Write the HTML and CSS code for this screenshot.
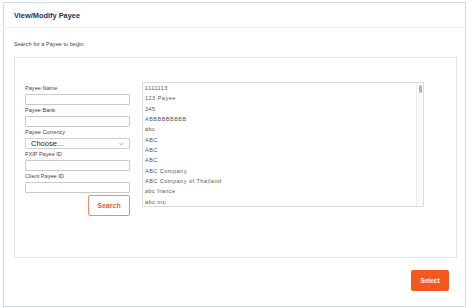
FILE: index.html
```html
<!DOCTYPE html>
<html>
<head>
<meta charset="utf-8">
<link rel="stylesheet" href="styles.css">
</head>
<body>
<div class="frame">
  <div class="header"><h1 class="title">View/Modify Payee</h1></div>
  <p class="intro">Search for a Payee to begin.</p>
  <div class="panel">
    <div class="form">
      <label class="lbl">Payee Name</label>
      <div class="input"></div>
      <label class="lbl">Payee Bank</label>
      <div class="input"></div>
      <label class="lbl">Payee Currency</label>
      <div class="select"><span class="choose">Choose...</span><svg class="caret" width="5" height="4" viewBox="0 0 5 4"><path d="M0.5 1 L2.5 3 L4.5 1" fill="none" stroke="#999" stroke-width="0.8"/></svg></div>
      <label class="lbl">FXIP Payee ID</label>
      <div class="input"></div>
      <label class="lbl">Client Payee ID</label>
      <div class="input"></div>
      <div class="actions"><button class="btn-search">Search</button></div>
    </div>
    <div class="listbox">
      <ul class="items">
        <li>1111113</li>
        <li>123 Payee</li>
        <li>345</li>
        <li>ABBBBBBBBB</li>
        <li>abc</li>
        <li>ABC</li>
        <li>ABC</li>
        <li>ABC</li>
        <li>ABC Company</li>
        <li>ABC Company of Thailand</li>
        <li>abc france</li>
        <li>abc inc</li>
      </ul>
      <div class="scrollbar"><div class="thumb"></div></div>
    </div>
  </div>
  <div class="footer"><button class="btn-select">Select</button></div>
</div>
</body>
</html>
```
FILE: styles.css
```css
html, body {
  margin: 0;
  padding: 0;
  background: #fff;
}
body {
  font-family: "Liberation Sans", Arial, sans-serif;
  color: #333;
}
.frame {
  box-sizing: border-box;
  margin: 2px 0 0 3px;
  width: 463px;
  height: 305px;
  border: 1.5px solid #cfdcec;
  display: flex;
  flex-direction: column;
}
.header {
  height: 23px;
  border-bottom: 1px solid #eef0f3;
  display: flex;
  align-items: center;
  padding-left: 10px;
  padding-top: 1px;
}
.title {
  margin: 0;
  font-size: 7.4px;
  font-weight: bold;
  color: #1c2f55;
}
.intro {
  margin: 12px 0 0 10px;
  font-size: 5.6px;
  line-height: 8px;
  color: #444;
}
.panel {
  box-sizing: border-box;
  margin: 9px 0 0 10px;
  width: 443px;
  height: 201px;
  border: 1px solid #e3e3e3;
  display: flex;
  align-items: flex-start;
  padding: 24px 0 0 10px;
  gap: 12px;
}
.form {
  width: 105px;
  display: flex;
  flex-direction: column;
  margin-top: 2px;
}
.lbl {
  font-size: 5.6px;
  line-height: 8px;
  height: 8px;
  color: #444;
  margin-bottom: 2px;
}
.input, .select {
  box-sizing: border-box;
  height: 11px;
  border: 1px solid #c9c9c9;
  border-radius: 1px;
  background: #fff;
  margin-bottom: 1px;
}
.select {
  display: flex;
  align-items: center;
  justify-content: space-between;
  padding: 0 5px 0 5px;
  border-color: #d0d0d0;
}
.choose {
  font-size: 7.5px;
  color: #222;
}
.actions {
  display: flex;
  justify-content: flex-end;
  margin-top: 1px;
}
.btn-search {
  box-sizing: border-box;
  width: 42px;
  height: 21px;
  border: 1px solid #f08c6a;
  border-radius: 2px;
  background: #fff;
  color: #ef5a2a;
  font-family: "Liberation Sans", Arial, sans-serif;
  font-weight: bold;
  font-size: 7px;
  padding: 0;
}
.listbox {
  box-sizing: border-box;
  width: 282px;
  height: 125px;
  border: 1px solid #dcdcdc;
  display: flex;
  overflow: hidden;
}
.items {
  list-style: none;
  margin: 0;
  padding: 0 0 0 2px;
  flex: 1;
}
.items li {
  font-size: 5.5px;
  line-height: 10.35px;
  height: 10.35px;
  letter-spacing: 0.5px;
  color: #555;
}
.scrollbar {
  width: 6px;
  border-left: 1px solid #ececec;
  background: #fafafa;
  display: flex;
  justify-content: center;
}
.thumb {
  width: 3px;
  height: 8px;
  margin-top: 2px;
  background: #b5b5b5;
  border-radius: 1.5px;
}
.footer {
  display: flex;
  justify-content: flex-end;
  padding: 12px 16px 0 0;
}
.btn-select {
  box-sizing: border-box;
  width: 38px;
  height: 21px;
  border: none;
  border-radius: 2px;
  background: #f3581c;
  color: #fff;
  font-family: "Liberation Sans", Arial, sans-serif;
  font-weight: bold;
  font-size: 6.5px;
  padding: 0;
}
```
